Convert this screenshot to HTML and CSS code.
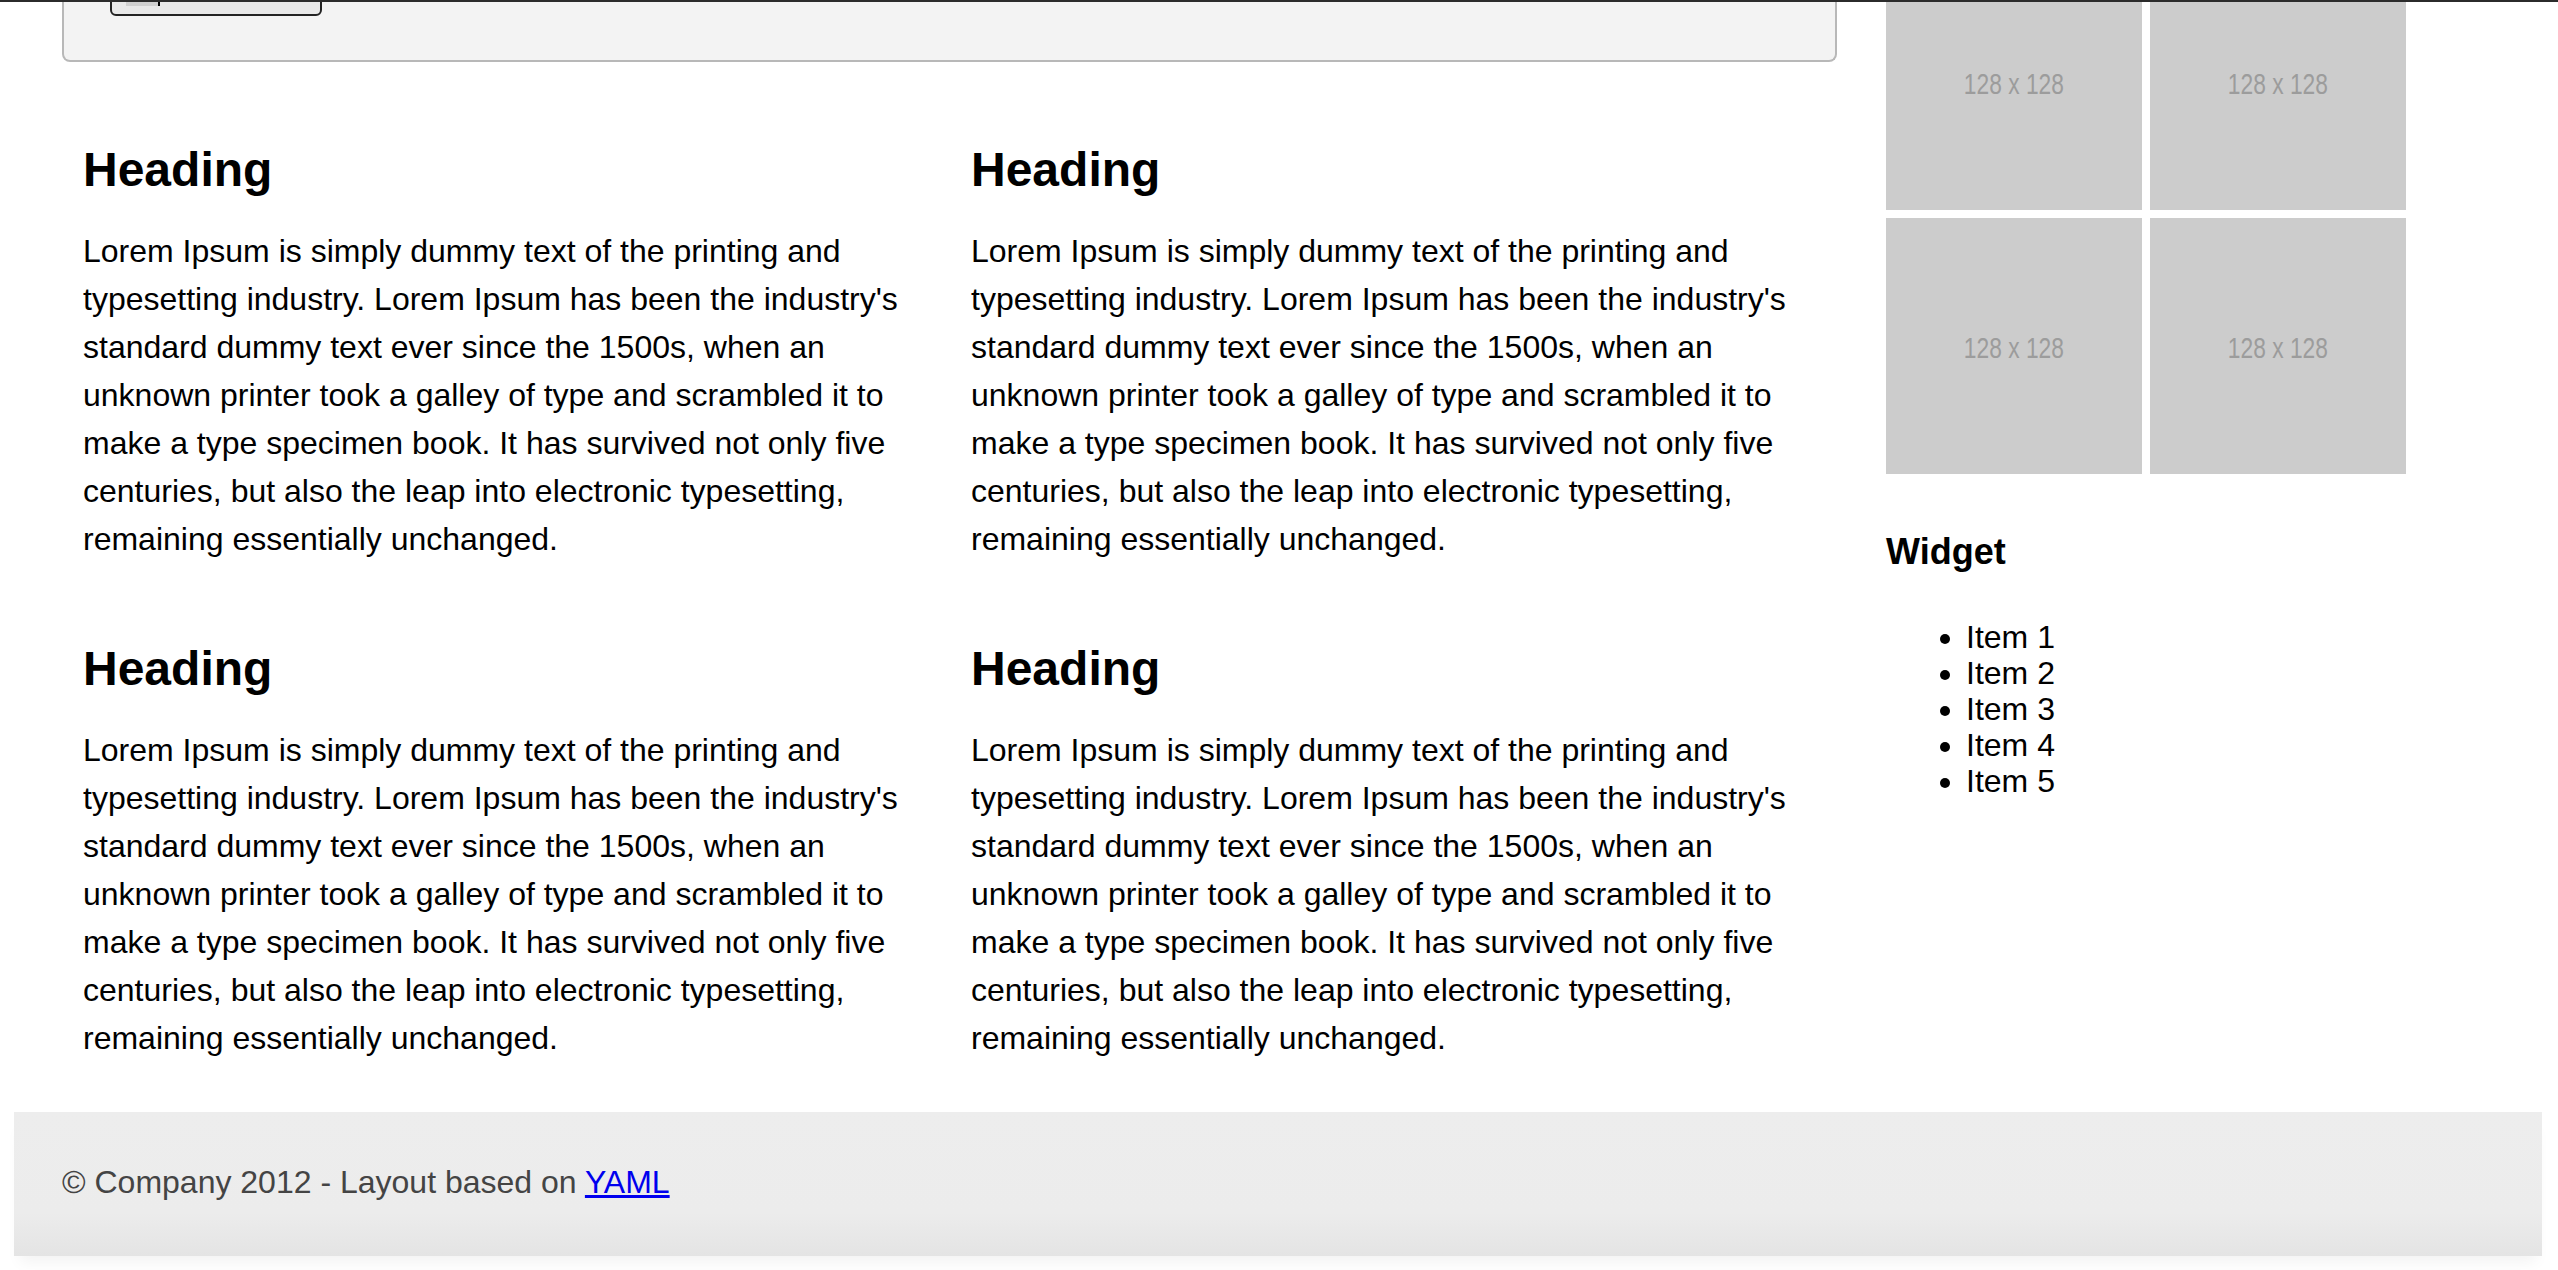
FILE: index.html
```html
<!DOCTYPE html>
<html lang="en">
<head>
<meta charset="utf-8">
<title>YAML Layout</title>
<link rel="stylesheet" href="styles.css">
</head>
<body>
<div class="topline"></div>
<div class="page">
  <div class="layout">
    <main class="main">
      <div class="toolbox">
        <div class="field"><span class="sel"></span><span class="caret"></span></div>
      </div>
      <div class="articles">
        <article class="post">
          <h2>Heading</h2>
          <p>Lorem Ipsum is simply dummy text of the printing and typesetting industry. Lorem Ipsum has been the industry's standard dummy text ever since the 1500s, when an unknown printer took a galley of type and scrambled it to make a type specimen book. It has survived not only five centuries, but also the leap into electronic typesetting, remaining essentially unchanged.</p>
        </article>
        <article class="post">
          <h2>Heading</h2>
          <p>Lorem Ipsum is simply dummy text of the printing and typesetting industry. Lorem Ipsum has been the industry's standard dummy text ever since the 1500s, when an unknown printer took a galley of type and scrambled it to make a type specimen book. It has survived not only five centuries, but also the leap into electronic typesetting, remaining essentially unchanged.</p>
        </article>
        <article class="post">
          <h2>Heading</h2>
          <p>Lorem Ipsum is simply dummy text of the printing and typesetting industry. Lorem Ipsum has been the industry's standard dummy text ever since the 1500s, when an unknown printer took a galley of type and scrambled it to make a type specimen book. It has survived not only five centuries, but also the leap into electronic typesetting, remaining essentially unchanged.</p>
        </article>
        <article class="post">
          <h2>Heading</h2>
          <p>Lorem Ipsum is simply dummy text of the printing and typesetting industry. Lorem Ipsum has been the industry's standard dummy text ever since the 1500s, when an unknown printer took a galley of type and scrambled it to make a type specimen book. It has survived not only five centuries, but also the leap into electronic typesetting, remaining essentially unchanged.</p>
        </article>
      </div>
    </main>
    <aside class="sidebar">
      <div class="thumbs">
        <div class="thumb"><span class="thumb-label">128 x 128</span></div>
        <div class="thumb"><span class="thumb-label">128 x 128</span></div>
        <div class="thumb"><span class="thumb-label">128 x 128</span></div>
        <div class="thumb"><span class="thumb-label">128 x 128</span></div>
      </div>
      <h3 class="widget-title">Widget</h3>
      <ul class="widget-list">
        <li>Item 1</li>
        <li>Item 2</li>
        <li>Item 3</li>
        <li>Item 4</li>
        <li>Item 5</li>
      </ul>
    </aside>
  </div>
  <footer class="footer">© Company 2012 - Layout based on <a href="#">YAML</a></footer>
</div>
</body>
</html>
```

FILE: styles.css
```css
html, body {
  margin: 0;
  padding: 0;
  background: #fff;
}

body {
  font-family: "Liberation Sans", Arial, Helvetica, sans-serif;
  color: #000;
}

.topline {
  position: fixed;
  top: 0;
  left: 0;
  right: 0;
  height: 2px;
  background: #2b2b2b;
  z-index: 10;
}

.page {
  margin-top: -46px;
  padding-bottom: 14px;
}

.layout {
  display: grid;
  grid-template-columns: 1775px 520px;
  column-gap: 49px;
  padding-left: 62px;
  align-items: start;
}

/* grey tool box at top of main column */
.toolbox {
  height: 108px;
  box-sizing: border-box;
  background: #f3f3f3;
  border: 2px solid #b8b8b8;
  border-top: 0;
  border-radius: 0 0 8px 8px;
  padding: 9px 0 0 46px;
}

.field {
  width: 212px;
  height: 53px;
  box-sizing: border-box;
  border: 2px solid #222;
  border-radius: 6px;
  background: #e8e8e8;
  display: flex;
  align-items: flex-end;
  padding: 0 0 8px 14px;
}

.sel {
  width: 32px;
  height: 20px;
  background: #cfcfcf;
}

.caret {
  width: 2px;
  height: 20px;
  background: #000;
}

/* articles */
.articles {
  display: grid;
  grid-template-columns: 840px 840px;
  column-gap: 48px;
  row-gap: 76px;
  padding: 78px 0 0 21px;
}

.post h2 {
  font-size: 48px;
  line-height: 60px;
  font-weight: bold;
  margin: 0 0 27px;
}

.post p {
  font-size: 32px;
  line-height: 48px;
  margin: 0;
}

/* sidebar */
.thumbs {
  display: grid;
  grid-template-columns: 256px 256px;
  gap: 8px;
}

.thumb {
  height: 256px;
  background: #cccccc;
  color: #9c9c9c;
  display: flex;
  align-items: center;
  justify-content: center;
}

.thumb-label {
  display: inline-block;
  font-size: 30px;
  transform: scaleX(0.76);
  margin-top: 4px;
}

.widget-title {
  font-size: 36px;
  line-height: 44px;
  font-weight: bold;
  margin: 56px 0 45px;
}

.widget-list {
  margin: 0;
  padding-left: 80px;
  font-size: 32px;
  line-height: 36px;
}

/* footer */
.footer {
  margin: 50px 16px 0 14px;
  padding: 46px 48px 50px;
  background: linear-gradient(#ededed 0%, #ececec 70%, #e4e4e4 100%);
  box-shadow: 0 12px 14px -6px rgba(0, 0, 0, 0.05);
  color: #444;
  font-size: 32px;
  line-height: 48px;
}

.footer a {
  color: #0000ee;
  text-decoration: underline;
}
```
